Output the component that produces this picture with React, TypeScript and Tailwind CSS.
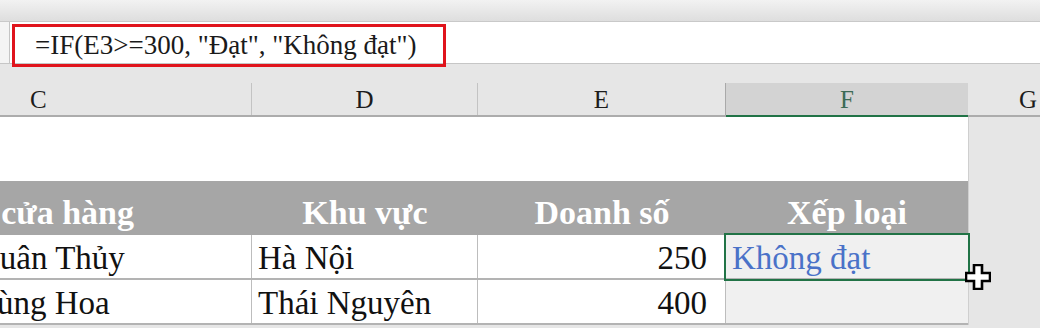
import React from 'react'

const serif = "font-['Liberation_Serif','Times_New_Roman',serif]"

type Row = {
  store: string
  storeShift: string
  region: string
  sales: number
  grade: string
}

const rows: Row[] = [
  { store: 'Xuân Thủy', storeShift: 'ml-[-24px]', region: 'Hà Nội', sales: 250, grade: 'Không đạt' },
  { store: 'Trùng Hoa', storeShift: 'ml-[-33px]', region: 'Thái Nguyên', sales: 400, grade: '' },
]

function FillCursor() {
  return (
    <svg
      width="26"
      height="26"
      viewBox="0 0 26 26"
      className="absolute left-[239px] top-[29px] z-20"
    >
      <polygon
        points="9,1 17,1 17,9 25,9 25,17 17,17 17,25 9,25 9,17 1,17 1,9 9,9"
        fill="#ffffff"
        stroke="#000000"
        strokeWidth="2.6"
        strokeLinejoin="miter"
      />
    </svg>
  )
}

export default function App() {
  return (
    <div className={`w-[1040px] h-[328px] overflow-hidden bg-[#e6e6e6] ${serif}`}>
      {/* ribbon edge */}
      <div className="h-[22px] bg-gradient-to-b from-[#f2f2f2] to-[#dedede] border-b border-[#c9c9c9]" />

      {/* formula bar */}
      <div className="relative h-[42px] flex bg-white border-b border-[#c6c6c6]">
        <div className="w-[10px] bg-[#f4f4f4] border-r border-[#c4c4c4]" />
        <div className="flex-1" />
        <div className="absolute left-[12px] top-[2px] w-[434px] h-[43px] border-[3px] border-[#e0141c] z-10 flex items-center pl-[20px] text-[27px] leading-none text-[#1a1a1a] whitespace-nowrap">
          =IF(E3&gt;=300, "Đạt", "Không đạt")
        </div>
      </div>

      {/* column headers */}
      <div className="pt-[19px]">
        <div className="flex h-[34px] border-b-2 border-[#acacac] text-[25px] leading-none text-[#1c1c1c]">
          <div className="w-[252px] flex items-end pb-[3px] pl-[30px] border-r border-[#c3c3c3]">C</div>
          <div className="w-[226px] flex items-end pb-[3px] justify-center border-r border-[#c3c3c3]">D</div>
          <div className="w-[247px] flex items-end pb-[3px] justify-center">E</div>
          <div className="relative w-[243px] flex items-end pb-[3px] justify-center bg-[#d3d3d3] text-[#3d6b55] border-l border-[#a9a9a9]">
            F
            <div className="absolute left-0 right-0 bottom-[-2px] h-[2px] bg-[#217346]" />
          </div>
          <div className="flex-1 flex items-end pb-[3px] justify-end pr-[3px]">G</div>
        </div>
      </div>

      {/* sheet */}
      <div className="flex">
        <div className="w-[968px]">
          <div className="h-[64px] bg-white" />

          <div className="flex h-[54px] bg-[#a6a6a6] text-white font-bold text-[34px] leading-none whitespace-nowrap">
            <div className="w-[252px] overflow-hidden flex items-end pb-[5px]">
              <span className="ml-[-64px]">Tên cửa hàng</span>
            </div>
            <div className="w-[226px] flex items-end justify-center pb-[5px]">Khu vực</div>
            <div className="w-[248px] flex items-end justify-center pb-[5px]">Doanh số</div>
            <div className="w-[242px] flex items-end justify-center pb-[5px]">Xếp loại</div>
          </div>

          {rows.map((r, i) => (
            <div
              key={i}
              className="flex h-[45px] text-[33px] leading-none text-[#111111] whitespace-nowrap border-b-2 border-[#b3b3b3]"
            >
              <div className="w-[252px] overflow-hidden flex items-end pb-[3px] bg-white border-r border-[#bdbdbd]">
                <span className={r.storeShift}>{r.store}</span>
              </div>
              <div className="w-[226px] flex items-end pb-[3px] pl-[6px] bg-white border-r border-[#bdbdbd]">
                {r.region}
              </div>
              <div className="w-[248px] flex items-end justify-end pb-[3px] pr-[18px] bg-white border-r border-[#bdbdbd]">
                {r.sales}
              </div>
              <div className="relative w-[242px] flex items-end pb-[3px] pl-[6px] bg-[#f0f0f0] text-[#4a72c8]">
                {r.grade}
                {i === 0 && (
                  <>
                    <div className="absolute left-[-2px] right-[-2px] top-[-2px] bottom-[-3px] border-2 border-[#217346] z-10" />
                    <FillCursor />
                  </>
                )}
              </div>
            </div>
          ))}
        </div>
        <div className="flex-1 bg-[#e6e6e6] border-l border-[#cfcfcf]" />
      </div>
    </div>
  )
}
